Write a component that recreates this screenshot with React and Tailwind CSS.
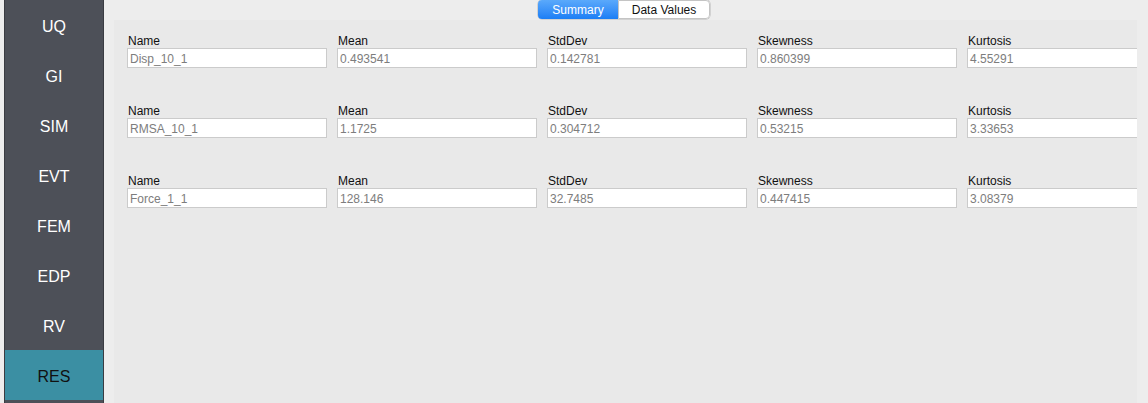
import React from "react";

const nav = ["UQ", "GI", "SIM", "EVT", "FEM", "EDP", "RV", "RES"];
const rows = [
  ["Disp_10_1", "0.493541", "0.142781", "0.860399", "4.55291"],
  ["RMSA_10_1", "1.1725", "0.304712", "0.53215", "3.33653"],
  ["Force_1_1", "128.146", "32.7485", "0.447415", "3.08379"],
];
const labels = ["Name", "Mean", "StdDev", "Skewness", "Kurtosis"];

export default function App() {
  return (
    <div
      className="flex w-[1148px] h-[403px] bg-[#ededed] overflow-hidden"
      style={{ fontFamily: '"Liberation Sans", Arial, sans-serif' }}
    >
      <div className="ml-[4px] w-[100px] h-full bg-[#4d5058] border-x border-[#3a3c42] flex flex-col shrink-0">
        {nav.map((n) => (
          <div
            key={n}
            className={
              "h-[50px] shrink-0 flex items-center justify-center pt-[3px] text-[16px] font-medium " +
              (n === "RES" ? "bg-[#3b8fa3] text-[#111]" : "text-white")
            }
          >
            {n}
          </div>
        ))}
      </div>
      <div className="ml-[10px] mr-[11px] flex-1 flex flex-col min-w-0">
        <div className="h-[20px] flex justify-center items-start pr-[3px]">
          <div className="flex h-[19px] text-[12px] rounded-[4px] overflow-hidden shadow-[0_0_0_0.5px_#b8b8b8]">
            <div className="w-[80px] flex items-center justify-center text-white bg-gradient-to-b from-[#5aa9fb] to-[#1a7ef5]">
              Summary
            </div>
            <div className="w-[92px] flex items-center justify-center text-[#111] bg-white border border-[#c4c4c4] rounded-r-[4px]">
              Data Values
            </div>
          </div>
        </div>
        <div className="flex-1 bg-[#e9e9e9] overflow-hidden pt-[14px] pl-[13px] flex flex-col gap-[36px]">
          {rows.map((r, i) => (
            <div key={i} className="flex gap-[10px]">
              {r.map((v, j) => (
                <div key={j} className="w-[200px] shrink-0 flex flex-col">
                  <div className="h-[14px] text-[12px] leading-[14px] text-[#111] pl-[1px]">
                    {labels[j]}
                  </div>
                  <div className="h-[20px] bg-white border border-[#cbcbcb] text-[12px] text-[#7d7d7d] pl-[2px] pt-[2px] flex items-center">
                    {v}
                  </div>
                </div>
              ))}
            </div>
          ))}
        </div>
      </div>
    </div>
  );
}
